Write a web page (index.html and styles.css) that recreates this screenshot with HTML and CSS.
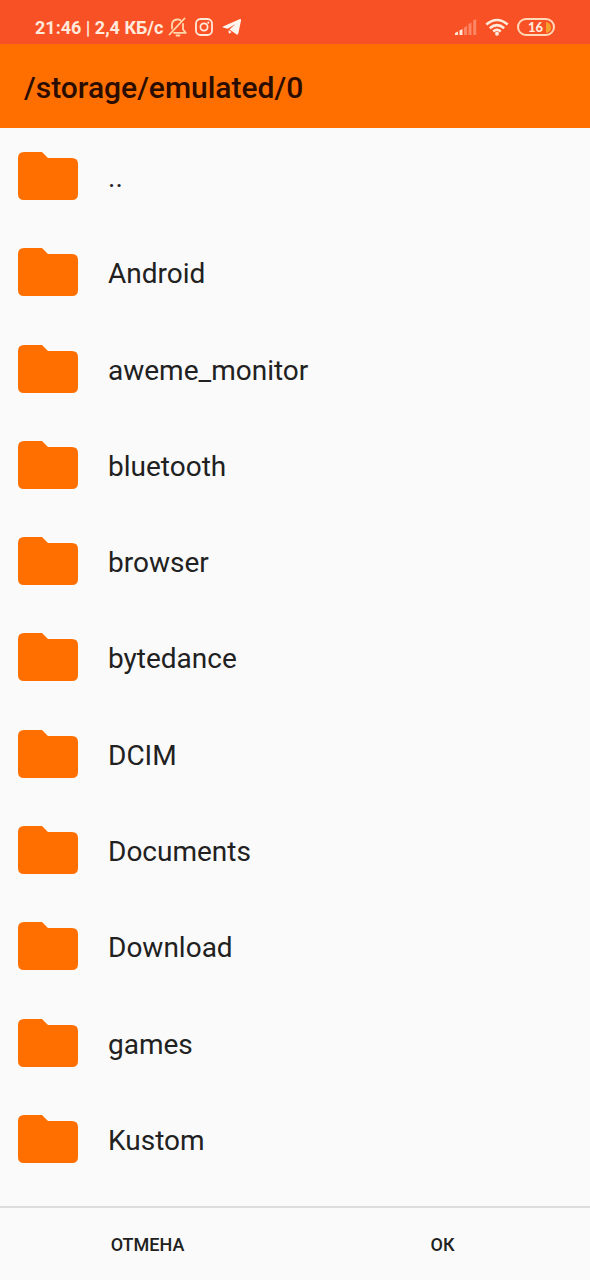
FILE: index.html
```html
<!DOCTYPE html>
<html lang="ru">
<head>
<meta charset="utf-8">
<meta name="viewport" content="width=device-width, initial-scale=1">
<title>/storage/emulated/0</title>
<link rel="stylesheet" href="styles.css">
</head>
<body>
<svg class="defs" aria-hidden="true">
  <symbol id="folder" viewBox="0 0 60 48"><path d="M6 0H24L30 6H54Q60 6 60 12V42Q60 48 54 48H6Q0 48 0 42V6Q0 0 6 0Z"/></symbol>
</svg>
<div class="statusbar">
  <div class="status-left">
    <span class="status-text">21:46 | 2,4 КБ/с</span>
    <svg class="bell" viewBox="0 0 20 20" fill="none" stroke="currentColor" stroke-width="1.8" stroke-linecap="round" stroke-linejoin="round" aria-hidden="true">
      <path d="M1.500 17.500L16.500 1.500M4 11.500V8Q4 3 9 2.500Q11 2.300 12.500 3.200M15 7V12.500L17.800 15.800H6M8.500 18.500H11.500"/>
    </svg>
    <svg class="insta" viewBox="0 0 18 18" fill="none" stroke="currentColor" stroke-width="1.800" aria-hidden="true">
      <rect x="1" y="1" width="16" height="16" rx="4.500"/><circle cx="9" cy="9" r="3.600"/><circle cx="13.300" cy="4.700" r="1.100" fill="currentColor" stroke="none"/>
    </svg>
    <svg class="plane" viewBox="0 0 20 18" fill="currentColor" aria-hidden="true">
      <path d="M1 8.400L17.500 1.200Q19.300 .6 19 2.500L16.300 15.500Q15.900 17.300 14.300 16.300L7.500 11.600L13.500 6L5.600 10.800L1 9.400Q.2 8.900 1 8.400Z"/>
      <path d="M6.500 12L9.500 14L7.800 15.400Q6.900 16 6.700 14.800Z"/>
    </svg>
  </div>
  <div class="status-right">
    <svg class="signal" viewBox="0 0 24 18" fill="currentColor" aria-hidden="true">
      <path d="M1 17V15L4 13.500V17ZM5.500 17V12.500L8.500 11V17Z"/>
      <path opacity=".35" d="M10 17V9.500L13 8V17ZM14.500 17V6L17.500 4.500V17ZM19.200 17V2.500L22.200 1V17Z"/>
    </svg>
    <svg class="wifi" viewBox="0 0 24 18" fill="none" stroke="currentColor" stroke-width="2.600" aria-hidden="true">
      <path d="M1.300 6.600Q12-2.600 22.700 6.600M4.800 10.200Q12 4 19.200 10.200M8.200 13.500Q12 10.300 15.800 13.500"/><circle cx="12" cy="15.700" r="2" fill="currentColor" stroke="none"/>
    </svg>
    <span class="battery">16<svg class="charge" viewBox="0 0 5 11" aria-hidden="true"><path d="M0 0Q5 1 5 5.500T0 11Z" fill="#f5a12b"/></svg></span>
  </div>
</div>
<header class="appbar"><h1 class="path">/storage/emulated/0</h1></header>
<main class="files">
  <button class="row" type="button"><svg class="folder" aria-hidden="true"><use href="#folder"/></svg><span class="name">..</span></button>
  <button class="row" type="button"><svg class="folder" aria-hidden="true"><use href="#folder"/></svg><span class="name">Android</span></button>
  <button class="row" type="button"><svg class="folder" aria-hidden="true"><use href="#folder"/></svg><span class="name">aweme_monitor</span></button>
  <button class="row" type="button"><svg class="folder" aria-hidden="true"><use href="#folder"/></svg><span class="name">bluetooth</span></button>
  <button class="row" type="button"><svg class="folder" aria-hidden="true"><use href="#folder"/></svg><span class="name">browser</span></button>
  <button class="row" type="button"><svg class="folder" aria-hidden="true"><use href="#folder"/></svg><span class="name">bytedance</span></button>
  <button class="row" type="button"><svg class="folder" aria-hidden="true"><use href="#folder"/></svg><span class="name">DCIM</span></button>
  <button class="row" type="button"><svg class="folder" aria-hidden="true"><use href="#folder"/></svg><span class="name">Documents</span></button>
  <button class="row" type="button"><svg class="folder" aria-hidden="true"><use href="#folder"/></svg><span class="name">Download</span></button>
  <button class="row" type="button"><svg class="folder" aria-hidden="true"><use href="#folder"/></svg><span class="name">games</span></button>
  <button class="row" type="button"><svg class="folder" aria-hidden="true"><use href="#folder"/></svg><span class="name">Kustom</span></button>
</main>
<footer class="actions">
  <button class="action" type="button">ОТМЕНА</button>
  <button class="action" type="button">ОК</button>
</footer>
</body>
</html>
```
FILE: styles.css
```css
* { box-sizing: border-box; }
body {
  margin: 0;
  min-height: 100vh;
  display: flex;
  flex-direction: column;
  background: #fafafa;
  color: #212121;
  font-family: Roboto, "Noto Sans", sans-serif;
}
button {
  border: 0;
  margin: 0;
  background: none;
  color: inherit;
  font: inherit;
}
.defs { display: none; }
.statusbar {
  display: flex;
  justify-content: space-between;
  height: 44px;
  padding: 10px 35px 0 35px;
  background: #f95126;
  color: #ffeadb;
}
.status-left, .status-right { display: flex; align-items: center; }
.status-text { font-size: 18px; font-weight: 700; line-height: 24px; padding-top: 2px; margin-right: 5px; white-space: nowrap; }
.bell { width: 20px; height: 20px; margin-right: 7px; color: #ffd9ad; }
.insta { width: 18px; height: 18px; margin-right: 9px; }
.plane { width: 20px; height: 18px; color: #fff5ef; }
.signal { width: 24px; height: 18px; margin-right: 7px; }
.wifi { width: 24px; height: 18px; margin-right: 8px; }
.battery {
  display: flex;
  align-items: center;
  justify-content: flex-end;
  gap: 3px;
  width: 38px;
  height: 18px;
  padding-right: 2px;
  border: 2px solid #ffd9b8;
  border-radius: 9px;
  font-family: Lato, sans-serif;
  font-size: 13px;
  font-weight: 900;
  line-height: 14px;
}
.charge { width: 5px; height: 11px; }
.appbar { height: 84px; padding: 0 24px; display: flex; align-items: center; background: #ff6f00; }
.path { margin: 4px 0 0; font-size: 30px; line-height: 36px; font-weight: 500; color: #2b0d00; }
.files { flex: 1; display: flex; flex-direction: column; padding-bottom: 19px; }
.row {
  flex: 1;
  min-height: 72px;
  display: flex;
  align-items: center;
  gap: 30px;
  padding: 0 18px;
  text-align: left;
}
.folder { width: 60px; height: 48px; flex: none; fill: #ff6f00; }
.name { font-size: 28px; line-height: 34px; padding-top: 4px; }
.actions { display: flex; height: 74px; border-top: 2px solid #dcdcdc; }
.action { flex: 1; padding: 2px 0 0; font-size: 18px; font-weight: 500; line-height: 24px; }
```
